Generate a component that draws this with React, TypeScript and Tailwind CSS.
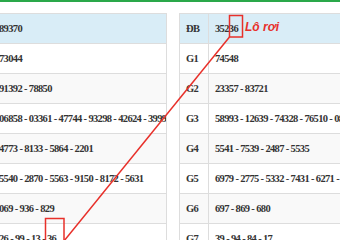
const labels = ["ĐB", "G1", "G2", "G3", "G4", "G5", "G6", "G7"];

const leftValues = [
  "89370",
  "73044",
  "91392 - 78850",
  "06858 - 03361 - 47744 - 93298 - 42624 - 39990",
  "4773 - 8133 - 5864 - 2201",
  "5540 - 2870 - 5563 - 9150 - 8172 - 5631",
  "069 - 936 - 829",
  "26 - 99 - 13 - 36",
];

const rightValues = [
  "35236",
  "74548",
  "23357 - 83721",
  "58993 - 12639 - 74328 - 76510 - 08124 - 51207",
  "5541 - 7539 - 2487 - 5535",
  "6979 - 2775 - 5332 - 7431 - 6271 - 4815",
  "697 - 869 - 680",
  "39 - 94 - 84 - 17",
];

function rowBg(i: number) {
  if (i === 0) return "bg-[#d9edf7]";
  return i % 2 === 0 ? "bg-[#f9f9f9]" : "bg-white";
}

export default function App() {
  return (
    <div className="relative w-[340px] h-[240px] overflow-hidden bg-white font-['Liberation_Serif',serif] text-[10.5px] font-bold text-[#333] tracking-[-0.65px]">
      <div className="h-[2px] bg-[#2aa84a]" />
      <div className="flex pt-[11px] gap-[12px]">
        {/* left table (previous draw, cropped) */}
        <div className="w-[167px] shrink-0 border-t border-r border-[#ddd] overflow-hidden">
          {leftValues.map((v, i) => (
            <div
              key={i}
              className={`h-[30px] flex items-center border-b border-[#ddd] whitespace-nowrap -ml-[1px] ${rowBg(i)}`}
            >
              {v}
            </div>
          ))}
        </div>
        {/* right table */}
        <div className="flex-1 border-t border-l border-[#ddd] overflow-hidden">
          {rightValues.map((v, i) => (
            <div key={i} className={`h-[30px] flex border-b border-[#ddd] ${rowBg(i)}`}>
              <div className="w-[29px] shrink-0 border-r border-[#ddd] flex items-center pl-[6px]">
                {labels[i]}
              </div>
              <div className="flex items-center pl-[6px] whitespace-nowrap">{v}</div>
            </div>
          ))}
        </div>
      </div>

      {/* annotation */}
      <svg className="absolute inset-0 pointer-events-none" width="340" height="240">
        <rect x="229.5" y="15.5" width="13" height="21.5" fill="none" stroke="#e8302a" strokeWidth="1.5" />
        <rect x="45.5" y="218.5" width="18.5" height="30" fill="none" stroke="#e8302a" strokeWidth="1.5" />
        <line x1="64" y1="241" x2="229.5" y2="37" stroke="#e8302a" strokeWidth="1.5" />
      </svg>
      <span className="absolute left-[245px] top-[21px] leading-none font-['Liberation_Sans',sans-serif] italic font-bold tracking-normal text-[12px] text-[#e8302a]">
        Lô rơi
      </span>
    </div>
  );
}
